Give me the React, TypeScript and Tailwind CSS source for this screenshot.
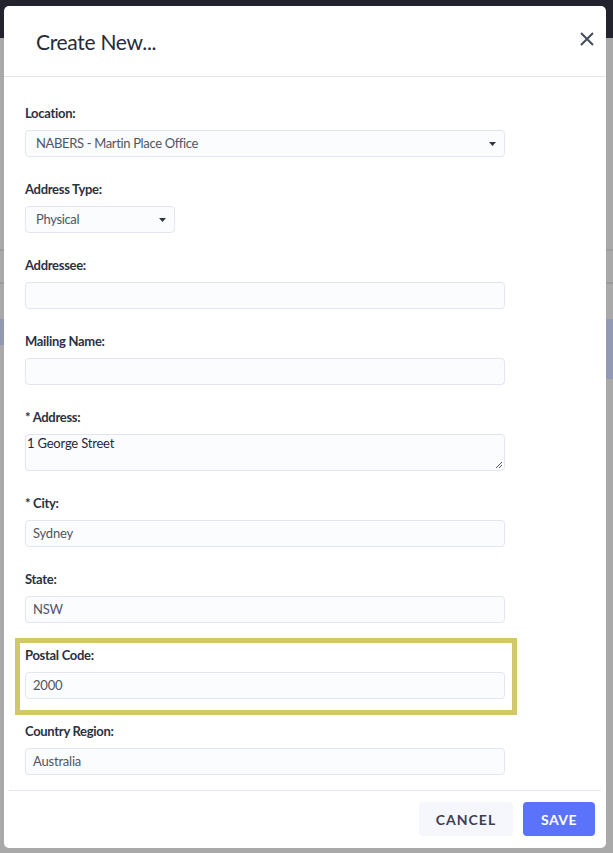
const font = { fontFamily: "Lato, 'Noto Sans', sans-serif" };

function Label({ children }: { children: React.ReactNode }) {
  return (
    <div className="h-[18px] mb-2 text-[13px] leading-[18px] font-bold tracking-[-0.3px] text-[#2b3142]">{children}</div>
  );
}

function Caret() {
  return (
    <svg width="7" height="4" viewBox="0 0 7 4" className="shrink-0">
      <path d="M0 0h7L3.5 4z" fill="#2f3442" />
    </svg>
  );
}

function Select({ value, width }: { value: string; width: string }) {
  return (
    <div
      className={`${width} h-[27px] flex items-center justify-between pl-[10px] pr-[8px] rounded-[4px] border border-[#e3e6f0] bg-[#fbfcfe] text-[13px] tracking-[-0.35px] text-[#4f5561]`}
    >
      <span>{value}</span>
      <Caret />
    </div>
  );
}

function Input({ value }: { value?: string }) {
  return (
    <div className="w-[480px] h-[27px] flex items-center px-[7px] rounded-[4px] border border-[#e3e6f0] bg-[#fbfcfe] text-[13px] tracking-[-0.2px] text-[#4f5561]">
      {value}
    </div>
  );
}

function Field({ label, children, last }: { label: string; children: React.ReactNode; last?: boolean }) {
  return (
    <div className={last ? "" : "mb-[23px]"}>
      <Label>{label}</Label>
      {children}
    </div>
  );
}

export default function App() {
  return (
    <div className="relative w-[613px] h-[853px] overflow-hidden bg-[#a9a9a9]" style={font}>
      {/* page behind the overlay */}
      <div className="h-[38px] bg-[#23232e]" />
      <div className="absolute left-0 top-[249px] w-full h-[2px] bg-[#9d9d9d]" />
      <div className="absolute left-0 top-[282px] w-full h-[2px] bg-[#9a9a9a]" />
      <div className="absolute left-0 top-[319px] w-full h-[26px] bg-[#9399b3]" />
      <div className="absolute right-0 top-[319px] w-[10px] h-[60px] bg-[#9399b3]" />

      {/* dialog */}
      <div className="absolute left-[4px] top-[6px] w-[602px] h-[842px] bg-white rounded-[5px] flex flex-col">
        <div className="h-[70px] flex items-center justify-between pl-[32px] pr-[12px] pt-[1px]">
          <h2 className="text-[21px] font-normal text-[#262b3c] tracking-[-0.3px]">Create New...</h2>
          <svg width="14" height="14" viewBox="0 0 14 14" className="mb-[6px]">
            <path d="M1 1l12 12M13 1L1 13" stroke="#474c5b" strokeWidth="2" />
          </svg>
        </div>
        <div className="h-px bg-[#e4e7f0]" />

        <div className="flex-1 pl-[21px] pt-[27px]">
          <Field label="Location:">
            <Select value="NABERS - Martin Place Office" width="w-[480px]" />
          </Field>
          <Field label="Address Type:">
            <Select value="Physical" width="w-[150px]" />
          </Field>
          <Field label="Addressee:">
            <Input />
          </Field>
          <Field label="Mailing Name:">
            <Input />
          </Field>
          <Field label="* Address:">
            <div className="relative w-[480px] h-[37px] px-[1px] rounded-[4px] border border-[#e3e6f0] bg-[#fbfcfe] text-[13px] leading-[16px] tracking-[-0.2px] text-[#23283a]">
              1 George Street
              <svg width="8" height="8" viewBox="0 0 8 8" className="absolute right-[1px] bottom-[1px]">
                <path d="M7 1L1 7M7 4L4 7" stroke="#555" strokeWidth="1" />
              </svg>
            </div>
          </Field>
          <Field label="* City:">
            <Input value="Sydney" />
          </Field>
          <Field label="State:">
            <Input value="NSW" />
          </Field>
          <div className="relative">
            <div className="absolute -left-[10px] -top-[8px] w-[502px] h-[77px] border-[5px] border-[#d1c86c]" />
            <Field label="Postal Code:">
              <Input value="2000" />
            </Field>
          </div>
          <Field label="Country Region:" last>
            <Input value="Australia" />
          </Field>
        </div>

        <div className="h-px bg-[#e4e7f0] mx-[5px]" />
        <div className="flex justify-end gap-[10px] pt-[11px] pb-[12px] pr-[11px]">
          <button className="w-[94px] h-[34px] rounded-[4px] bg-[#f6f7fc] text-[14px] font-bold tracking-[1px] text-[#3b4050]">
            CANCEL
          </button>
          <button className="w-[72px] h-[34px] rounded-[4px] bg-[#5b72fb] text-[14px] font-bold tracking-[0.5px] text-white">
            SAVE
          </button>
        </div>
      </div>
    </div>
  );
}
